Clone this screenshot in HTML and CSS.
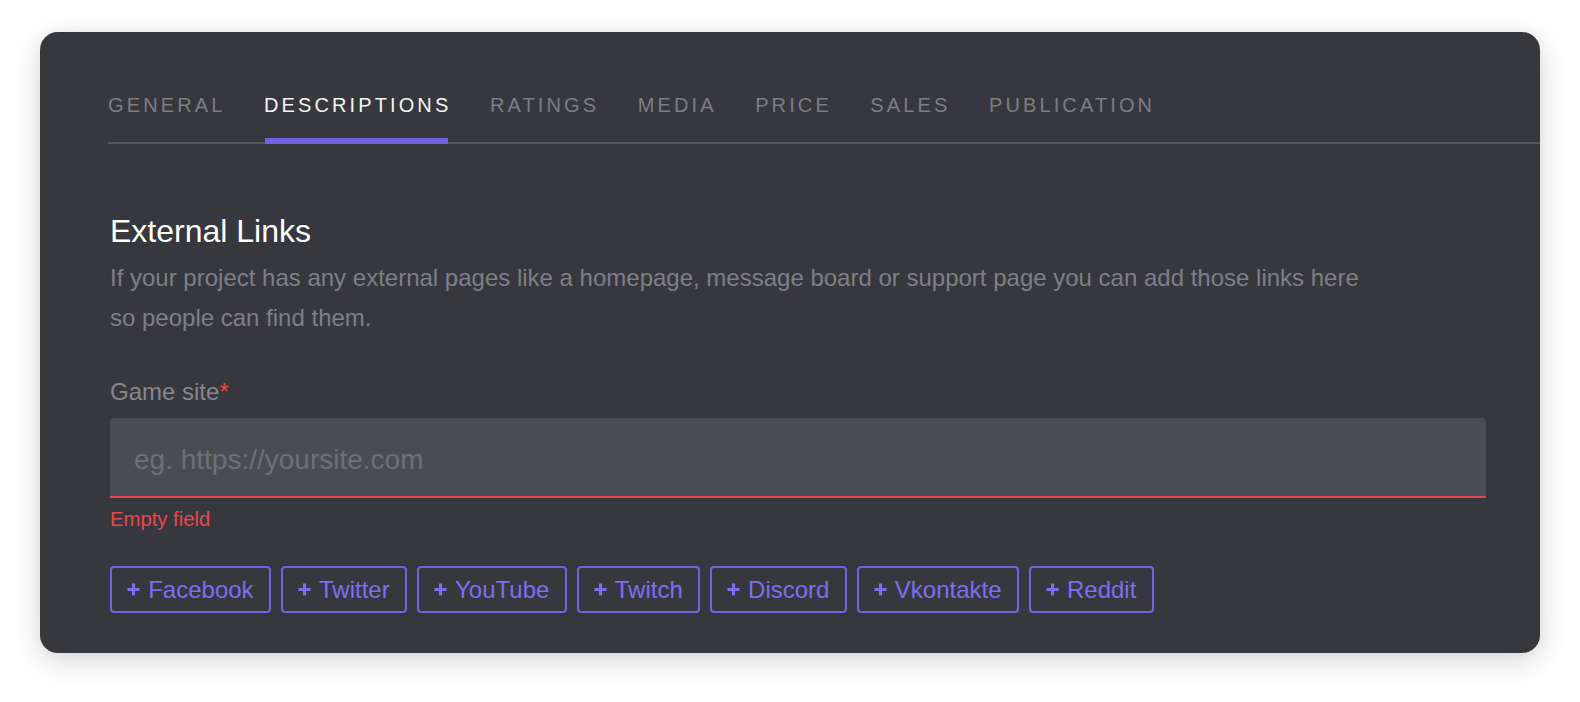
FILE: index.html
```html
<!DOCTYPE html>
<html lang="en">
<head>
<meta charset="utf-8">
<title>External Links</title>
<link rel="stylesheet" href="styles.css">
</head>
<body>
<div class="card">
  <nav class="tabs">
    <a class="tab">General</a>
    <a class="tab active">Descriptions</a>
    <a class="tab">Ratings</a>
    <a class="tab">Media</a>
    <a class="tab">Price</a>
    <a class="tab">Sales</a>
    <a class="tab">Publication</a>
  </nav>
  <section class="content">
    <h2 class="title">External Links</h2>
    <p class="desc">If your project has any external pages like a homepage, message board or support page you can add those links here so people can find them.</p>
    <label class="label" for="site">Game site<span class="req">*</span></label>
    <input class="field" id="site" type="text" placeholder="eg. https://yoursite.com">
    <div class="error">Empty field</div>
    <div class="links">
      <button class="add"><svg class="plus" viewBox="0 0 13 13"><path d="M6.5 0.5v12M0.5 6.5h12"/></svg>Facebook</button>
      <button class="add"><svg class="plus" viewBox="0 0 13 13"><path d="M6.5 0.5v12M0.5 6.5h12"/></svg>Twitter</button>
      <button class="add"><svg class="plus" viewBox="0 0 13 13"><path d="M6.5 0.5v12M0.5 6.5h12"/></svg>YouTube</button>
      <button class="add"><svg class="plus" viewBox="0 0 13 13"><path d="M6.5 0.5v12M0.5 6.5h12"/></svg>Twitch</button>
      <button class="add"><svg class="plus" viewBox="0 0 13 13"><path d="M6.5 0.5v12M0.5 6.5h12"/></svg>Discord</button>
      <button class="add"><svg class="plus" viewBox="0 0 13 13"><path d="M6.5 0.5v12M0.5 6.5h12"/></svg>Vkontakte</button>
      <button class="add"><svg class="plus" viewBox="0 0 13 13"><path d="M6.5 0.5v12M0.5 6.5h12"/></svg>Reddit</button>
    </div>
  </section>
</div>
</body>
</html>
```
FILE: styles.css
```css
* { box-sizing: border-box; }

html, body {
  margin: 0;
  padding: 0;
  background: #ffffff;
}

body {
  font-family: "Liberation Sans", Arial, Helvetica, sans-serif;
  padding: 32px 40px;
}

.card {
  width: 1500px;
  background: #37383d;
  border-radius: 18px;
  box-shadow: 0 8px 30px rgba(0, 0, 0, 0.16), 0 0 10px rgba(0, 0, 0, 0.05);
  padding-top: 62px;
  overflow: hidden;
}

.tabs {
  display: flex;
  gap: 38.5px;
  margin-left: 68px;
  border-bottom: 2px solid #55565c;
}

.tab {
  position: relative;
  display: block;
  font-size: 20px;
  line-height: 23px;
  letter-spacing: 3.12px;
  text-transform: uppercase;
  color: #7b7d85;
  padding-bottom: 25px;
  cursor: pointer;
}

.tab.active {
  color: #f4f4f6;
}

.tab.active::after {
  content: "";
  position: absolute;
  left: 1px;
  right: 3px;
  bottom: -2px;
  height: 6px;
  background: #7064e2;
}

.content {
  padding: 69px 54px 40px 70px;
}

.title {
  margin: 0;
  font-size: 32px;
  line-height: 36px;
  font-weight: 400;
  color: #ffffff;
}

.desc {
  margin: 9px 0 0;
  max-width: 1265px;
  font-size: 24px;
  line-height: 40px;
  color: #7d7f88;
}

.label {
  display: block;
  margin-top: 40px;
  font-size: 24px;
  line-height: 28px;
  color: #85878f;
}

.req {
  color: #e8474b;
}

.field {
  display: block;
  width: 100%;
  height: 80px;
  margin-top: 12px;
  padding: 6px 24px 0;
  background: #4a4c55;
  border: none;
  border-bottom: 2px solid #e8474b;
  border-radius: 4px 4px 0 0;
  font-family: inherit;
  font-size: 28px;
  color: #e6e6ea;
  outline: none;
}

.field::placeholder {
  color: #6d6f78;
}

.error {
  margin-top: 10px;
  font-size: 20.3px;
  line-height: 23px;
  color: #e8474b;
}

.links {
  display: flex;
  flex-wrap: wrap;
  gap: 10px;
  margin-top: 35px;
}

.add {
  display: flex;
  align-items: center;
  gap: 8px;
  height: 47px;
  padding: 0 15.2px;
  background: transparent;
  border: 2px solid #7064e2;
  border-radius: 4px;
  font-family: inherit;
  font-size: 24px;
  color: #7a6ff0;
  cursor: pointer;
}

.plus {
  width: 13px;
  height: 13px;
  flex: none;
  fill: none;
  stroke: #7a6ff0;
  stroke-width: 3;
}
```
